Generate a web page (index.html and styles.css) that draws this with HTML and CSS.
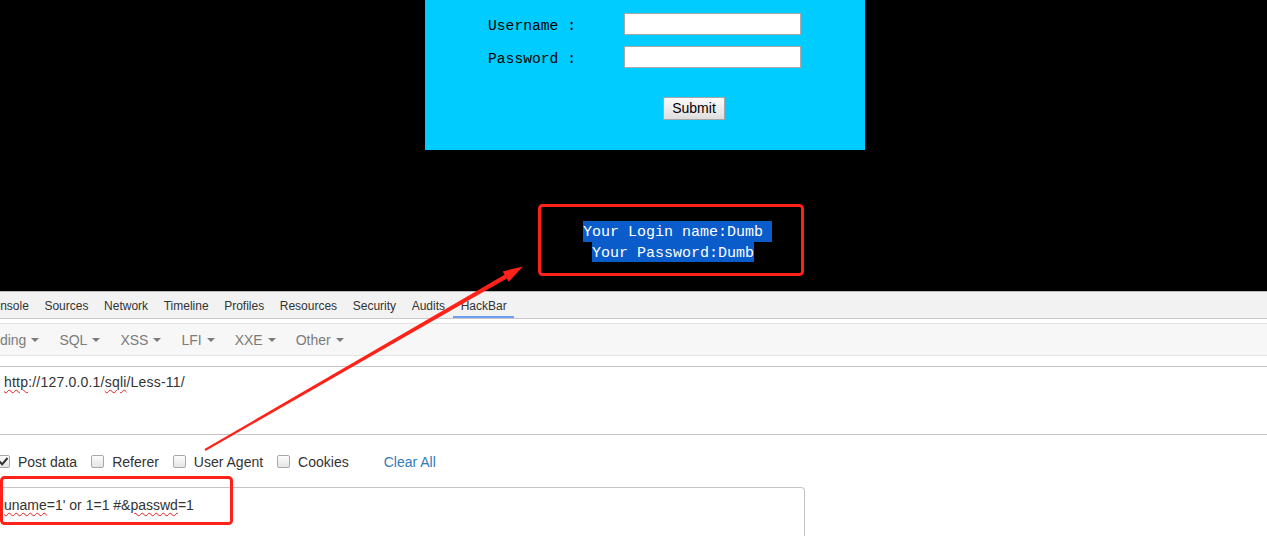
FILE: index.html
```html
<!DOCTYPE html>
<html>
<head>
<meta charset="utf-8">
<link rel="stylesheet" href="styles.css">
</head>
<body>
<div class="site">
  <div class="login">
    <div class="row"><span class="label">Username :</span><span class="input"></span></div>
    <div class="row"><span class="label">Password :</span><span class="input"></span></div>
    <div class="submit-wrap"><span class="submit">Submit</span></div>
  </div>
  <div class="result">
    <div class="line"><span class="sel trail">Your Login name:Dumb&nbsp;</span></div>
    <div class="line"><span class="sel">Your Password:Dumb</span></div>
  </div>
</div>
<div class="devtools">
  <div class="tabs">
    <span class="tab">Console</span>
    <span class="tab">Sources</span>
    <span class="tab">Network</span>
    <span class="tab">Timeline</span>
    <span class="tab">Profiles</span>
    <span class="tab">Resources</span>
    <span class="tab">Security</span>
    <span class="tab">Audits</span>
    <span class="tab active">HackBar</span>
  </div>
  <div class="toolbar">
    <span class="menu first">Encoding<i class="caret"></i></span>
    <span class="menu">SQL<i class="caret"></i></span>
    <span class="menu">XSS<i class="caret"></i></span>
    <span class="menu">LFI<i class="caret"></i></span>
    <span class="menu">XXE<i class="caret"></i></span>
    <span class="menu">Other<i class="caret"></i></span>
  </div>
  <div class="url-box"><span class="sp">http</span>://127.0.0.1/<span class="sp">sqli</span>/Less-11/</div>
  <div class="options">
    <span class="opt"><span class="cb checked"><svg width="11" height="11" viewBox="0 0 11 11"><path d="M1.5 5.5 L4.2 8.3 L9.5 2" fill="none" stroke="#333" stroke-width="2"/></svg></span>Post data</span>
    <span class="opt"><span class="cb"></span>Referer</span>
    <span class="opt"><span class="cb"></span>User Agent</span>
    <span class="opt"><span class="cb"></span>Cookies</span>
    <span class="clear">Clear All</span>
  </div>
  <div class="post-box"><span class="sp">uname</span>=1' or 1=1 #&amp;<span class="sp">passwd</span>=1</div>
</div>
<svg class="annot" width="1267" height="536" viewBox="0 0 1267 536">
  <rect x="539.5" y="205.5" width="263" height="69" rx="3" fill="none" stroke="#ff2219" stroke-width="3"/>
  <rect x="1.5" y="477.5" width="230" height="46" rx="3" fill="none" stroke="#ff2219" stroke-width="3"/>
  <polygon points="204.5,449.1 504.6,274.7 502.7,271.4 523,266.5 508.7,281.8 506.8,278.5 205.5,450.9" fill="#ff2219"/>
</svg>
</body>
</html>
```
FILE: styles.css
```css
html, body {
  margin: 0;
  padding: 0;
}
body {
  width: 1267px;
  height: 536px;
  overflow: hidden;
  position: relative;
  background: #fff;
  font-family: "Liberation Sans", Arial, sans-serif;
}
.site {
  background: #000;
  height: 291px;
  overflow: hidden;
}
.login {
  margin-left: 425px;
  width: 440px;
  height: 150px;
  background: #00ccff;
  box-sizing: border-box;
  padding-top: 13px;
}
.row {
  display: flex;
  align-items: center;
  height: 22px;
  margin-bottom: 11px;
}
.label {
  margin-left: 63px;
  width: 136px;
  padding-top: 3px;
  font-family: "Liberation Mono", "Courier New", monospace;
  font-size: 14.67px;
  color: #000;
}
.input {
  width: 177px;
  height: 22px;
  box-sizing: border-box;
  background: #fff;
  border: 1px solid #a9a9a9;
}
.submit-wrap {
  margin-top: 29px;
  margin-left: 238px;
}
.submit {
  display: inline-block;
  width: 62px;
  height: 23px;
  box-sizing: border-box;
  border: 1px solid #a6a6a6;
  background: linear-gradient(#fbfbfb, #dedede);
  font-size: 14px;
  line-height: 21px;
  text-align: center;
  color: #000;
}
.result {
  margin-top: 71px;
  margin-left: 538px;
  width: 270px;
  text-align: center;
  font-family: "Liberation Mono", "Courier New", monospace;
  font-size: 15px;
}
.line {
  height: 20.5px;
}
.sel {
  display: inline-block;
  background: #0a5ccb;
  color: #fff;
  line-height: 20px;
  padding-top: 2px;
  height: 20.5px;
  box-sizing: border-box;
  white-space: pre;
}
.sel.trail {
  margin-right: -9px;
}
.devtools {
  border-top: 1px solid #b9b9b9;
}
.tabs {
  display: flex;
  height: 26px;
  background: #f2f2f2;
  border-bottom: 1px solid #c9c9c9;
  margin-left: -23px;
}
.tab {
  padding: 0 7.8px;
  font-size: 12px;
  line-height: 28px;
  color: #333;
}
.tab.active {
  box-shadow: inset 0 -2px 0 #6b9ff0;
}
.toolbar {
  display: flex;
  align-items: center;
  margin-top: 4px;
  height: 31px;
  background: #f7f7f7;
  border-top: 1px solid #e4e4e4;
  border-bottom: 1px solid #e4e4e4;
}
.menu {
  display: flex;
  align-items: center;
  font-size: 14px;
  color: #7b7b7b;
  margin-right: 20px;
}
.menu.first {
  margin-left: -32px;
}
.caret {
  display: inline-block;
  width: 0;
  height: 0;
  margin-left: 5px;
  border-left: 4px solid transparent;
  border-right: 4px solid transparent;
  border-top: 4px solid #7b7b7b;
}
.url-box {
  margin-top: 10px;
  height: 69px;
  box-sizing: border-box;
  border-top: 1px solid #c4c4c4;
  border-bottom: 1px solid #c4c4c4;
  padding: 5px 4px;
  font-size: 14px;
  letter-spacing: 0.2px;
  line-height: 20px;
  color: #333;
}
.sp {
  text-decoration: underline wavy #e0201a;
  text-decoration-thickness: 1px;
  text-underline-offset: 2px;
}
.options {
  display: flex;
  align-items: center;
  height: 52px;
  padding-top: 1px;
  box-sizing: border-box;
  margin-left: -3px;
  font-size: 14px;
  color: #333;
}
.opt {
  display: flex;
  align-items: center;
  margin-right: 14px;
}
.cb {
  display: inline-flex;
  align-items: center;
  justify-content: center;
  width: 13px;
  height: 13px;
  box-sizing: border-box;
  border: 1px solid #a8a8a8;
  border-radius: 2px;
  background: linear-gradient(#fdfdfd, #e4e4e4);
  margin-right: 8px;
}
.clear {
  margin-left: 21px;
  color: #337ab7;
}
.post-box {
  width: 805px;
  height: 60px;
  box-sizing: border-box;
  border: 1px solid #c4c4c4;
  border-left: none;
  border-top-right-radius: 4px;
  padding: 7px 4px;
  font-size: 14px;
  line-height: 20px;
  color: #333;
}
.annot {
  position: absolute;
  left: 0;
  top: 0;
  pointer-events: none;
}
```
